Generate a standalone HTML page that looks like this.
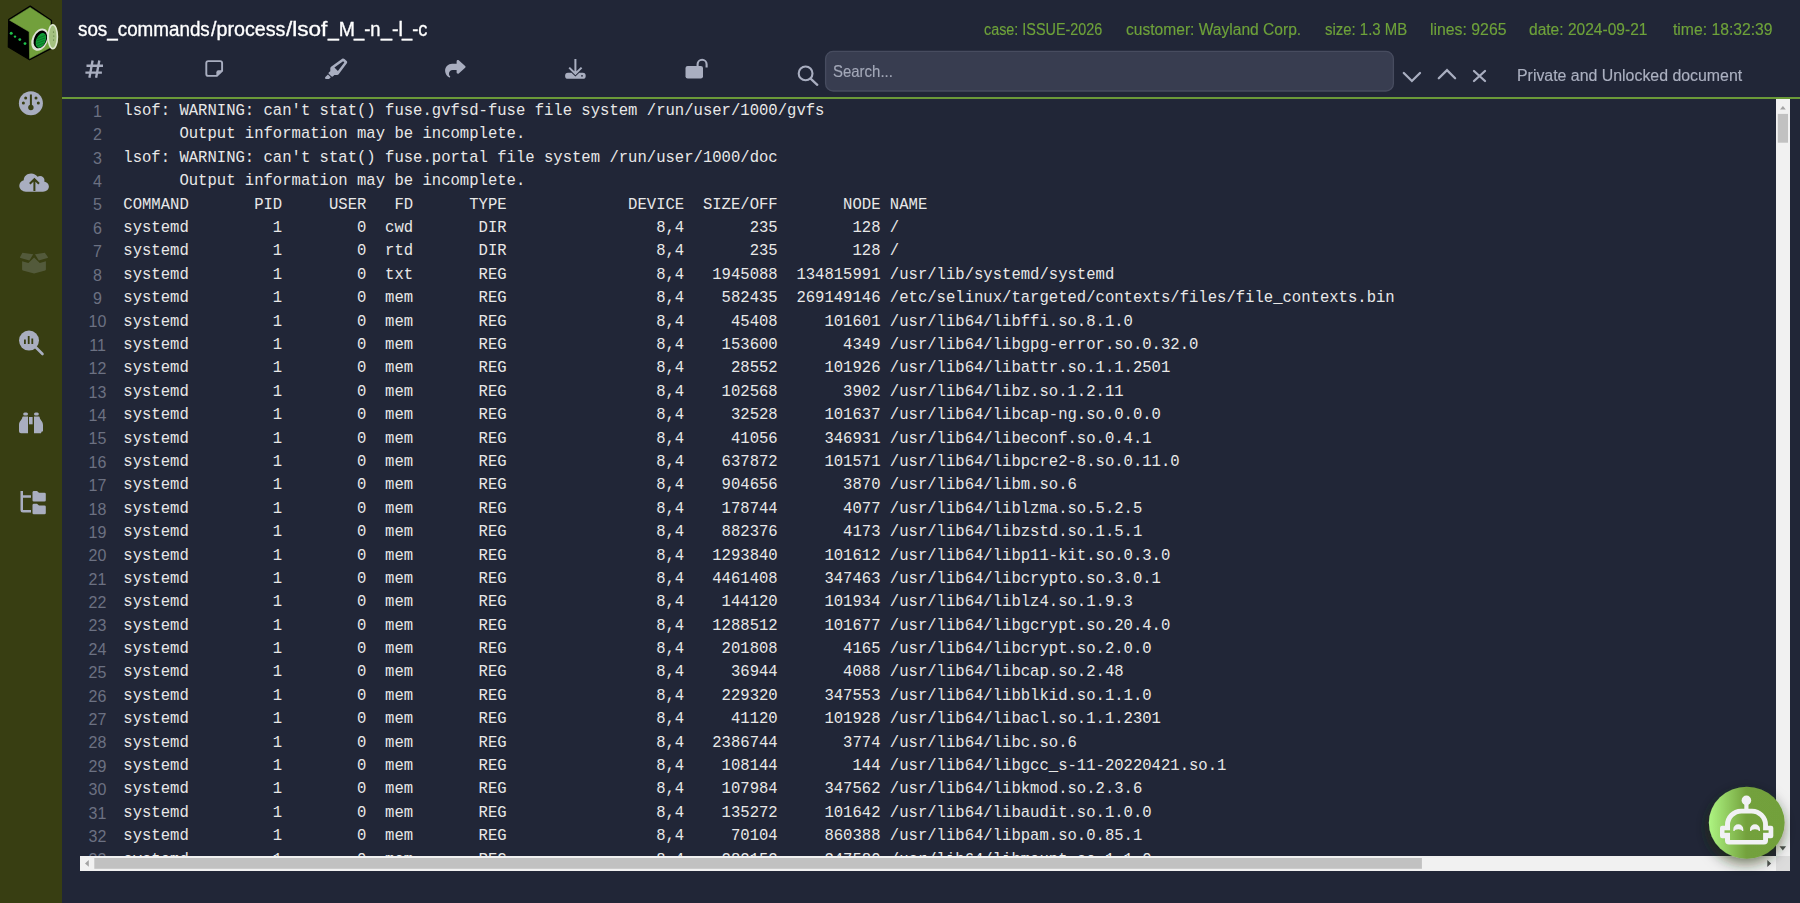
<!DOCTYPE html>
<html><head><meta charset="utf-8"><style>
html,body{margin:0;padding:0;width:1800px;height:903px;overflow:hidden;background:#212637;}
*{box-sizing:border-box}
.sb{position:absolute;left:0;top:0;width:62px;height:903px;background:#383e12}
.tx{position:absolute;font-family:"Liberation Sans",sans-serif;line-height:1;white-space:pre;transform-origin:0 0;-webkit-text-stroke:0.15px currentColor}
.ttl{-webkit-text-stroke:0.35px currentColor}
.gl{position:absolute;left:62px;top:97px;width:1738px;height:2px;background:#6b9a38}
.code{position:absolute;left:80px;top:100.1px;width:1696px;height:755.9px;overflow:hidden}
.r{position:absolute;left:0;height:23.39px;white-space:pre}
.n{position:absolute;left:0;width:35px;text-align:center;top:-0.2px;font:16px/23.39px "Liberation Sans",sans-serif;color:#6c7182}
.t{position:absolute;left:43.3px;top:0;font:15.585px/23.39px "Liberation Mono",monospace;color:#e8e8e8}
.vs{position:absolute;left:1776px;top:99px;width:14px;height:757px;background:#f1f1f1}
.hs{position:absolute;left:80px;top:856px;width:1696px;height:15px;background:#f1f1f1}
.corner{position:absolute;left:1776px;top:856px;width:14px;height:15px;background:#dcdcdc}
.search{position:absolute;left:825px;top:51px;width:569px;height:41px;border-radius:8px;background:#383d50;border:1px solid #464b5e}
.ov{position:absolute;left:0;top:0}
</style></head><body>
<div class="sb"></div>
<svg class="ov" width="1800" height="100" viewBox="0 0 1800 100"><rect x="825.6" y="51.4" width="567.8" height="39.6" rx="7.5" fill="#383d50" stroke="#474c5f" stroke-width="1.3"/></svg>
<div class="tx ttl" style="left:78.30px;top:19.00px;font-size:20px;color:#ffffff;transform:scaleX(0.9407)">sos_commands</div>
<div class="tx ttl" style="left:210.80px;top:19.00px;font-size:20px;color:#ffffff;transform:scaleX(0.9853)">/process</div>
<div class="tx ttl" style="left:286.00px;top:19.00px;font-size:20px;color:#ffffff;transform:scaleX(1.1270)">/lsof</div>
<div class="tx ttl" style="left:327.97px;top:19.00px;font-size:20px;color:#ffffff;transform:scaleX(0.9741)">_M</div>
<div class="tx ttl" style="left:354.22px;top:19.00px;font-size:20px;color:#ffffff;transform:scaleX(0.9207)">_-n</div>
<div class="tx ttl" style="left:380.99px;top:19.00px;font-size:20px;color:#ffffff;transform:scaleX(0.9864)">_-l</div>
<div class="tx ttl" style="left:401.51px;top:19.00px;font-size:20px;color:#ffffff;transform:scaleX(0.9107)">_-c</div>
<div class="tx" style="left:984.30px;top:22.00px;font-size:16px;color:#6ea23a;transform:scaleX(0.8985)">case: ISSUE-2026</div>
<div class="tx" style="left:1126.10px;top:22.00px;font-size:16px;color:#6ea23a;transform:scaleX(0.9737)">customer: Wayland Corp.</div>
<div class="tx" style="left:1324.50px;top:22.00px;font-size:16px;color:#6ea23a;transform:scaleX(0.9330)">size: 1.3 MB</div>
<div class="tx" style="left:1429.71px;top:22.00px;font-size:16px;color:#6ea23a;transform:scaleX(0.9882)">lines: 9265</div>
<div class="tx" style="left:1529.40px;top:22.00px;font-size:16px;color:#6ea23a;transform:scaleX(0.9721)">date: 2024-09-21</div>
<div class="tx" style="left:1672.50px;top:22.00px;font-size:16px;color:#6ea23a;transform:scaleX(0.9822)">time: 18:32:39</div>
<div class="tx" style="left:1517.01px;top:67.80px;font-size:16px;color:#abb0c0;transform:scaleX(0.9929)">Private and Unlocked document</div>
<div class="tx" style="left:833.39px;top:62.70px;font-size:16.5px;color:#a3a8b8;transform:scaleX(0.9062)">Search...</div>
<div class="gl"></div>
<div class="code">
<div class="r" style="top:0.00px"><span class="n">1</span><span class="t">lsof: WARNING: can&#x27;t stat() fuse.gvfsd-fuse file system /run/user/1000/gvfs</span></div>
<div class="r" style="top:23.39px"><span class="n">2</span><span class="t">      Output information may be incomplete.</span></div>
<div class="r" style="top:46.78px"><span class="n">3</span><span class="t">lsof: WARNING: can&#x27;t stat() fuse.portal file system /run/user/1000/doc</span></div>
<div class="r" style="top:70.17px"><span class="n">4</span><span class="t">      Output information may be incomplete.</span></div>
<div class="r" style="top:93.56px"><span class="n">5</span><span class="t">COMMAND       PID     USER   FD      TYPE             DEVICE  SIZE/OFF       NODE NAME</span></div>
<div class="r" style="top:116.95px"><span class="n">6</span><span class="t">systemd         1        0  cwd       DIR                8,4       235        128 /</span></div>
<div class="r" style="top:140.34px"><span class="n">7</span><span class="t">systemd         1        0  rtd       DIR                8,4       235        128 /</span></div>
<div class="r" style="top:163.73px"><span class="n">8</span><span class="t">systemd         1        0  txt       REG                8,4   1945088  134815991 /usr/lib/systemd/systemd</span></div>
<div class="r" style="top:187.12px"><span class="n">9</span><span class="t">systemd         1        0  mem       REG                8,4    582435  269149146 /etc/selinux/targeted/contexts/files/file_contexts.bin</span></div>
<div class="r" style="top:210.51px"><span class="n">10</span><span class="t">systemd         1        0  mem       REG                8,4     45408     101601 /usr/lib64/libffi.so.8.1.0</span></div>
<div class="r" style="top:233.90px"><span class="n">11</span><span class="t">systemd         1        0  mem       REG                8,4    153600       4349 /usr/lib64/libgpg-error.so.0.32.0</span></div>
<div class="r" style="top:257.29px"><span class="n">12</span><span class="t">systemd         1        0  mem       REG                8,4     28552     101926 /usr/lib64/libattr.so.1.1.2501</span></div>
<div class="r" style="top:280.68px"><span class="n">13</span><span class="t">systemd         1        0  mem       REG                8,4    102568       3902 /usr/lib64/libz.so.1.2.11</span></div>
<div class="r" style="top:304.07px"><span class="n">14</span><span class="t">systemd         1        0  mem       REG                8,4     32528     101637 /usr/lib64/libcap-ng.so.0.0.0</span></div>
<div class="r" style="top:327.46px"><span class="n">15</span><span class="t">systemd         1        0  mem       REG                8,4     41056     346931 /usr/lib64/libeconf.so.0.4.1</span></div>
<div class="r" style="top:350.85px"><span class="n">16</span><span class="t">systemd         1        0  mem       REG                8,4    637872     101571 /usr/lib64/libpcre2-8.so.0.11.0</span></div>
<div class="r" style="top:374.24px"><span class="n">17</span><span class="t">systemd         1        0  mem       REG                8,4    904656       3870 /usr/lib64/libm.so.6</span></div>
<div class="r" style="top:397.63px"><span class="n">18</span><span class="t">systemd         1        0  mem       REG                8,4    178744       4077 /usr/lib64/liblzma.so.5.2.5</span></div>
<div class="r" style="top:421.02px"><span class="n">19</span><span class="t">systemd         1        0  mem       REG                8,4    882376       4173 /usr/lib64/libzstd.so.1.5.1</span></div>
<div class="r" style="top:444.41px"><span class="n">20</span><span class="t">systemd         1        0  mem       REG                8,4   1293840     101612 /usr/lib64/libp11-kit.so.0.3.0</span></div>
<div class="r" style="top:467.80px"><span class="n">21</span><span class="t">systemd         1        0  mem       REG                8,4   4461408     347463 /usr/lib64/libcrypto.so.3.0.1</span></div>
<div class="r" style="top:491.19px"><span class="n">22</span><span class="t">systemd         1        0  mem       REG                8,4    144120     101934 /usr/lib64/liblz4.so.1.9.3</span></div>
<div class="r" style="top:514.58px"><span class="n">23</span><span class="t">systemd         1        0  mem       REG                8,4   1288512     101677 /usr/lib64/libgcrypt.so.20.4.0</span></div>
<div class="r" style="top:537.97px"><span class="n">24</span><span class="t">systemd         1        0  mem       REG                8,4    201808       4165 /usr/lib64/libcrypt.so.2.0.0</span></div>
<div class="r" style="top:561.36px"><span class="n">25</span><span class="t">systemd         1        0  mem       REG                8,4     36944       4088 /usr/lib64/libcap.so.2.48</span></div>
<div class="r" style="top:584.75px"><span class="n">26</span><span class="t">systemd         1        0  mem       REG                8,4    229320     347553 /usr/lib64/libblkid.so.1.1.0</span></div>
<div class="r" style="top:608.14px"><span class="n">27</span><span class="t">systemd         1        0  mem       REG                8,4     41120     101928 /usr/lib64/libacl.so.1.1.2301</span></div>
<div class="r" style="top:631.53px"><span class="n">28</span><span class="t">systemd         1        0  mem       REG                8,4   2386744       3774 /usr/lib64/libc.so.6</span></div>
<div class="r" style="top:654.92px"><span class="n">29</span><span class="t">systemd         1        0  mem       REG                8,4    108144        144 /usr/lib64/libgcc_s-11-20220421.so.1</span></div>
<div class="r" style="top:678.31px"><span class="n">30</span><span class="t">systemd         1        0  mem       REG                8,4    107984     347562 /usr/lib64/libkmod.so.2.3.6</span></div>
<div class="r" style="top:701.70px"><span class="n">31</span><span class="t">systemd         1        0  mem       REG                8,4    135272     101642 /usr/lib64/libaudit.so.1.0.0</span></div>
<div class="r" style="top:725.09px"><span class="n">32</span><span class="t">systemd         1        0  mem       REG                8,4     70104     860388 /usr/lib64/libpam.so.0.85.1</span></div>
<div class="r" style="top:748.48px"><span class="n">33</span><span class="t">systemd         1        0  mem       REG                8,4    282152     347580 /usr/lib64/libmount.so.1.1.0</span></div>
</div>
<div class="vs"></div>
<div class="hs"></div>
<div class="corner"></div>

<svg class="ov" width="1800" height="903" viewBox="0 0 1800 903">
 <!-- hashtag -->
 <g stroke="#a9aec0" stroke-width="2.35" stroke-linecap="butt" fill="none">
  <path d="M92.6 60.5 L89.4 77.7 M99.3 60.5 L96.1 77.7 M86.5 65.7 H103 M85.4 72.6 H101.9"/>
 </g>
 <!-- sticky note -->
 <path d="M208.3 61.1 H220.1 A2 2 0 0 1 222.1 63.1 V70.8 L216.9 75.9 H208.3 A2 2 0 0 1 206.3 73.9 V63.1 A2 2 0 0 1 208.3 61.1 Z" fill="none" stroke="#a9aec0" stroke-width="1.9"/>
 <path d="M222.3 70.3 L216.4 76.2 V72.3 A2 2 0 0 1 218.4 70.3 Z" fill="#a9aec0"/>
 <!-- highlighter -->
 <path transform="translate(325.1,58.4) scale(0.0406,0.0400)" fill="#a9aec0" d="M315 315l158.4-215L444.1 70.6 229 229 315 315zm-187 5l0 0V248.3c0-15.3 7.2-29.6 19.5-38.6L420.6 8.4C428 2.9 437 0 446.2 0c11.4 0 22.4 4.5 30.5 12.6l54.8 54.8c8.1 8.1 12.6 19 12.6 30.5c0 9.2-2.9 18.2-8.4 25.6L334.4 396.5c-9 12.3-23.4 19.5-38.6 19.5H227.7l-30.3 30.3c-12.5 12.5-32.8 12.5-45.3 0L94.6 388.9c-12.5-12.5-12.5-32.8 0-45.3L128 320zM7 466.3l63-63 70.6 70.6-31 31c-4.5 4.5-10.6 7-17 7H24c-13.3 0-24-10.7-24-24v-4.7c0-6.4 2.5-12.5 7-17z"/>
 <!-- share -->
 <path transform="translate(445.1,58.75) scale(0.0400,0.0390)" fill="#a9aec0" d="M307 34.8c-11.5 5.1-19 16.6-19 29.2v64H176C78.8 128 0 206.8 0 304C0 417.3 81.5 467.9 100.2 478.1c2.5 1.4 5.3 1.9 8.1 1.9c10.9 0 19.7-8.9 19.7-19.7c0-7.5-4.3-14.4-9.8-19.5C108.8 431.9 96 414.4 96 384c0-53 43-96 96-96h96v64c0 12.6 7.4 24.1 19 29.2s25 3 34.4-5.4l160-144c6.7-6.1 10.6-14.7 10.6-23.8s-3.8-17.7-10.6-23.8l-160-144c-9.4-8.5-22.9-10.6-34.4-5.4z"/>
 <!-- download -->
 <path d="M575.4 59 V73.5 M569.2 67.6 L575.4 73.8 L581.6 67.6" stroke="#a9aec0" stroke-width="2" fill="none"/>
 <path d="M568 72.8 H571.5 L575.4 76.6 L579.3 72.8 H582.8 A2.9 2.9 0 0 1 585.7 75.7 V75.9 A2.9 2.9 0 0 1 582.8 78.8 H568 A2.9 2.9 0 0 1 565.1 75.9 V75.7 A2.9 2.9 0 0 1 568 72.8 Z" fill="#a9aec0"/>
 <circle cx="582" cy="75.8" r="0.9" fill="#212637"/>
 <!-- unlock -->
 <rect x="685.5" y="65.9" width="17.5" height="12.5" rx="2.2" fill="#a9aec0"/>
 <path d="M697.6 67 V64.3 A4.5 4.5 0 0 1 706.6 64.3 V67.5" stroke="#a9aec0" stroke-width="2.1" fill="none"/>
 <!-- search -->
 <circle cx="805.6" cy="73.4" r="6.9" stroke="#a9aec0" stroke-width="2.1" fill="none"/>
 <path d="M810.6 78.6 L817.3 84.8" stroke="#a9aec0" stroke-width="2.3" stroke-linecap="round"/>
 <!-- chevrons & x -->
 <path d="M1403.8 73 L1411.9 81 L1420 73" stroke="#a9aec0" stroke-width="2.3" fill="none" stroke-linecap="round"/>
 <path d="M1438.8 78.2 L1447 70.2 L1455.1 78.2" stroke="#a9aec0" stroke-width="2.3" fill="none" stroke-linecap="round"/>
 <path d="M1474 71 L1485 81 M1485 71 L1474 81" stroke="#a9aec0" stroke-width="2.3" fill="none" stroke-linecap="round"/>

 <!-- sidebar: gauge -->
 <circle cx="30.9" cy="103.2" r="12" fill="#a9aec0"/>
 <g fill="#383e12">
  <circle cx="25.7" cy="98" r="1.5"/><circle cx="36" cy="98" r="1.5"/>
  <circle cx="23.4" cy="103" r="1.5"/><circle cx="38.3" cy="103" r="1.5"/>
  <rect x="29.9" y="94.5" width="2" height="12"/>
  <circle cx="30.9" cy="107.5" r="2.7"/>
 </g>
 <!-- cloud upload -->
 <path transform="translate(19.3,172.2) scale(0.04625,0.0406)" fill="#a9aec0" d="M144 480C64.5 480 0 415.5 0 336c0-62.8 40.2-116.2 96.2-135.9c-.1-2.7-.2-5.4-.2-8.1c0-88.4 71.6-160 160-160c59.3 0 111 32.2 138.7 80.2C409.9 102 428.3 96 448 96c53 0 96 43 96 96c0 12.2-2.3 23.8-6.4 34.6C596 238.4 640 290.1 640 352c0 70.7-57.3 128-128 128H144z"/>
 <path d="M34.4 191 V179.5 M29.8 183.8 L34.4 179.2 L39 183.8" stroke="#383e12" stroke-width="2" fill="none"/>
 <!-- box open (dim) -->
 <g fill="#535a3b">
  <path d="M22.1 261.3 L28.4 262.9 L34.1 257.4 L39.8 262.9 L45.9 261.3 V269.6 A1 1 0 0 1 45.2 270.5 L34.1 273.4 L22.8 270.5 A1 1 0 0 1 22.1 269.6 Z"/>
  <path d="M22.4 252.7 L33.2 254.2 L29.4 260.6 L20.6 258.1 A1 1 0 0 1 20 257.2 Z"/>
  <path d="M44.8 252.7 L35 254.2 L38.8 260.6 L47.4 258.1 A1 1 0 0 0 48 257.2 Z"/>
 </g>
 <!-- magnifying glass chart -->
 <circle cx="29" cy="340.6" r="10" fill="#a9aec0"/>
 <path d="M36 347.5 L42.5 354" stroke="#a9aec0" stroke-width="2.6" stroke-linecap="round"/>
 <g fill="#383e12">
  <rect x="24" y="339.5" width="1.8" height="4.5"/><rect x="27.8" y="336" width="1.8" height="8"/><rect x="31.4" y="338.5" width="1.8" height="5.5"/>
 </g>
 <!-- binoculars -->
 <g fill="#a9aec0">
  <path d="M23 416.5 H28 V433.2 H21 A2 2 0 0 1 19 431.2 V425 C19 421 22.2 420 22.4 417 Z"/>
  <path d="M39.2 416.5 H34 V433.2 H41 A2 2 0 0 1 43 431.2 V425 C43 421 39.8 420 39.6 417 Z"/>
  <rect x="23.2" y="412.4" width="4.8" height="3.2" rx="1.5"/>
  <rect x="34" y="412.4" width="4.8" height="3.2" rx="1.5"/>
  <rect x="29" y="417" width="3.6" height="7.3"/>
 </g>
 <!-- folder tree -->
 <g fill="#a9aec0">
  <path d="M20.5 491 V510 A2.5 2.5 0 0 0 23 512.5 H31 V510 H23 V497.8 H31 V495.3 H23 V491 Z"/>
  <path d="M32.5 492.3 A1.5 1.5 0 0 1 34 491 H37 L39 492.8 H44.5 A1.3 1.3 0 0 1 45.8 494.1 V500.3 A1.3 1.3 0 0 1 44.5 501.6 H33.8 A1.3 1.3 0 0 1 32.5 500.3 Z"/>
  <path d="M32.5 505 A1.5 1.5 0 0 1 34 503.7 H37 L39 505.5 H44.5 A1.3 1.3 0 0 1 45.8 506.8 V512.9 A1.3 1.3 0 0 1 44.5 514.2 H33.8 A1.3 1.3 0 0 1 32.5 512.9 Z"/>
 </g>
</svg>


<svg class="ov" width="1800" height="903" viewBox="0 0 1800 903">
 <defs>
  <linearGradient id="rg" x1="0" y1="0" x2="1" y2="0">
   <stop offset="0" stop-color="#aef582"/>
   <stop offset="0.5" stop-color="#73a13c"/>
   <stop offset="1" stop-color="#72a03b"/>
  </linearGradient>
  <filter id="sh" x="-50%" y="-50%" width="200%" height="200%">
   <feGaussianBlur in="SourceAlpha" stdDeviation="7"/>
   <feOffset dx="-1" dy="5" result="o"/>
   <feFlood flood-color="#1c2a0c" flood-opacity="0.6"/>
   <feComposite in2="o" operator="in"/>
   <feMerge><feMergeNode/><feMergeNode in="SourceGraphic"/></feMerge>
  </filter>
 </defs>
 <!-- logo -->
 <g>
  <path d="M30.2 6 L51.5 20.6 L50.8 48.8 L29.6 59.8 L8.3 46.9 L8.7 19.6 Z" fill="#000" stroke="#000" stroke-width="1.2" stroke-linejoin="round"/>
  <path d="M30.1 7.4 L50.4 20.8 L50 47.8 L29.6 58.6 L29.2 31.8 L9.6 20.2 Z" fill="#72a03c" stroke="#72a03c" stroke-width="0.6" stroke-linejoin="round"/>
  <ellipse cx="39.9" cy="39.6" rx="7.9" ry="11.7" transform="rotate(24 39.9 39.6)" fill="#dfe3d8"/>
  <ellipse cx="40.3" cy="39.4" rx="6.2" ry="9.3" transform="rotate(24 40.3 39.4)" fill="#000"/>
  <ellipse cx="40.9" cy="40.3" rx="4.7" ry="7.8" transform="rotate(24 40.9 40.3)" fill="#0f9a35"/>
  <g stroke="#075a1c" stroke-width="0.6"><path d="M37 38.5 L45 35.5 M36.5 41 L45 38 M36.5 43.5 L44.5 40.5 M37 46 L44 43"/></g>
  <ellipse cx="52.8" cy="36.8" rx="4.6" ry="12" fill="#a3c080" stroke="#dfe8d2" stroke-width="1.6"/>
  <g fill="#4a6a30"><circle cx="53.5" cy="32" r="0.6"/><circle cx="53.8" cy="36" r="0.6"/><circle cx="53.6" cy="40" r="0.6"/></g>
  <g fill="#1fc24a">
   <circle cx="11.2" cy="33.2" r="1.5"/><circle cx="15" cy="36.6" r="1.2"/><circle cx="19.8" cy="39.6" r="1.4"/><circle cx="25" cy="43.6" r="1.4"/>
  </g>
 </g>
 <!-- scrollbar parts -->
 <rect x="1777.8" y="113.9" width="10.2" height="28.8" fill="#c1c1c1"/>
 <path d="M1780 109.5 L1782.9 106 L1785.8 109.5 Z" fill="#a3a3a3"/>
 <path d="M1779.5 846.2 L1782.8 850.4 L1786.1 846.2 Z" fill="#505050"/>
 <rect x="94.3" y="858" width="1327.6" height="10.8" fill="#c1c1c1"/>
 <path d="M88.8 860 L85 863.4 L88.8 866.8 Z" fill="#a3a3a3"/>
 <path d="M1767.3 860 L1771.1 863.5 L1767.3 867 Z" fill="#505050"/>
 <!-- robot -->
 <ellipse cx="1746.75" cy="822.8" rx="37.9" ry="36" fill="url(#rg)" filter="url(#sh)"/>
 <g fill="#f1f1f4">
  <circle cx="1746.4" cy="800.4" r="4.8"/>
  <rect x="1744.3" y="801" width="4.2" height="9"/>
  <path fill-rule="evenodd" d="M1725 844.5 V825 A16 16.3 0 0 1 1741 808.7 H1752 A16 16.3 0 0 1 1768 825 V840.5 A4 4 0 0 1 1764 844.5 H1729 A4 4 0 0 1 1725 840.5 Z M1730 840 H1763.1 V825 A11.5 11.5 0 0 0 1751.6 813.5 H1741.5 A11.5 11.5 0 0 0 1730 825 Z"/>
  <rect x="1720" y="825.8" width="7" height="12.5" rx="2.2"/>
  <rect x="1766.3" y="825.8" width="7" height="12.5" rx="2.2"/>
  <path fill-rule="evenodd" d="M1733.3 831 V829.3 A5 5 0 0 1 1743.3 829.3 V831 Z M1734.6 831 A3.7 1.7 0 0 1 1742 831 Z"/>
  <path fill-rule="evenodd" d="M1750 831 V829.3 A5 5 0 0 1 1760 829.3 V831 Z M1751.3 831 A3.7 1.7 0 0 1 1758.7 831 Z"/>
 </g>
 <rect x="1724.5" y="830.3" width="6" height="2.5" fill="#86bb50"/>
 <rect x="1762.6" y="830.3" width="6" height="2.5" fill="#72a03b"/>
</svg>

</body></html>
